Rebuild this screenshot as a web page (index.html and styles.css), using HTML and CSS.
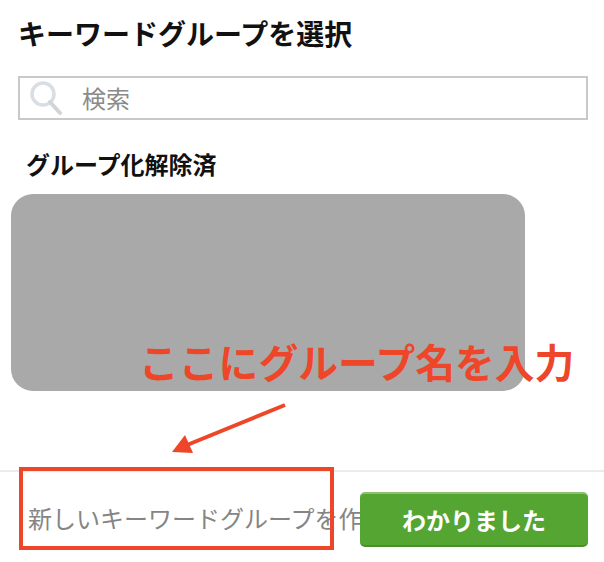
FILE: index.html
```html
<!DOCTYPE html>
<html lang="ja">
<head>
    <meta charset="UTF-8">
    <meta name="viewport" content="width=device-width, initial-scale=1.0">
    <title>キーワードグループを選択</title>
    <link rel="stylesheet" href="styles.css">
</head>
<body>
    <div class="dialog">
        <h1 class="title">キーワードグループを選択</h1>
        <div class="search">
            <svg class="search-icon" width="34" height="36" viewBox="0 0 34 36">
                <circle cx="14" cy="14" r="11" fill="#fff" stroke="#d9dee4" stroke-width="3.5"/>
                <path d="M21 22 L31 33" stroke="#d0d5da" stroke-width="4" stroke-linecap="round"/>
            </svg>
            <span class="search-text">検索</span>
        </div>
        <h2 class="group-title">グループ化解除済</h2>
        <div class="group-list"></div>
        <div class="footer">
            <input type="text" class="new-group" placeholder="新しいキーワードグループを作成">
            <button class="btn">わかりました</button>
        </div>
    </div>

    <!-- annotations on top of the screenshot -->
    <div class="note">ここにグループ名を入力</div>
    <svg class="arrow" width="130" height="60" viewBox="0 0 130 60">
        <path d="M123 2 L25 42" stroke="#ee4628" stroke-width="4" fill="none"/>
        <polygon points="10,49 23,32 31,50" fill="#ee4628"/>
    </svg>
    <div class="highlight"></div>
</body>
</html>
```

FILE: styles.css
```css
html, body {
    margin: 0;
    height: 100%;
    background-color: #ffffff;
}

body {
    position: relative;
    overflow: hidden;
    font-family: 'Noto Sans CJK JP', 'Liberation Sans', sans-serif;
}

.dialog {
    display: flex;
    flex-direction: column;
}

.title {
    margin: 13px 0 0 18px;
    font-size: 28px;
    line-height: 40px;
    font-weight: 700;
    color: #111111;
}

.search {
    display: flex;
    align-items: center;
    height: 40px;
    margin: 23px 16px 0 18px;
    border: 2px solid #c9c9c9;
}

.search-icon {
    margin-left: 9px;
}

.search-text {
    margin-left: 19px;
    padding-bottom: 2px;
    font-size: 24px;
    color: #8a8a8a;
}

.group-title {
    margin: 27px 0 0 26px;
    font-size: 24px;
    line-height: 34px;
    font-weight: 700;
    color: #111111;
}

.group-list {
    width: 514px;
    height: 197px;
    margin: 13px 0 0 11px;
    border-radius: 22px;
    background-color: #a9a9a9;
}

.footer {
    display: flex;
    align-items: flex-start;
    justify-content: space-between;
    height: 88px;
    margin-top: 79px;
    padding: 20px 16px 0 28px;
    border-top: 2px solid #ebebeb;
}

.new-group {
    width: 332px;
    height: 40px;
    margin-top: 6px;
    padding: 0;
    border: none;
    outline: none;
    font-family: inherit;
    font-size: 24px;
    line-height: 40px;
    color: #333333;
}

.new-group::placeholder {
    color: #858585;
    opacity: 1;
}

.btn {
    width: 228px;
    height: 55px;
    padding: 0;
    border: none;
    border-top: 2px solid #8cc06f;
    border-bottom: 2px solid #4a8f2c;
    border-radius: 5px;
    background-color: #55a532;
    color: #ffffff;
    font-family: inherit;
    font-size: 24px;
    font-weight: 700;
}

.note {
    position: absolute;
    left: 139px;
    top: 333px;
    font-size: 39.8px;
    line-height: 56px;
    font-weight: 700;
    white-space: nowrap;
    color: #ee4628;
}

.arrow {
    position: absolute;
    left: 162px;
    top: 403px;
}

.highlight {
    position: absolute;
    left: 19px;
    top: 467px;
    width: 307px;
    height: 75px;
    border: 4px solid #ee4628;
}
```
